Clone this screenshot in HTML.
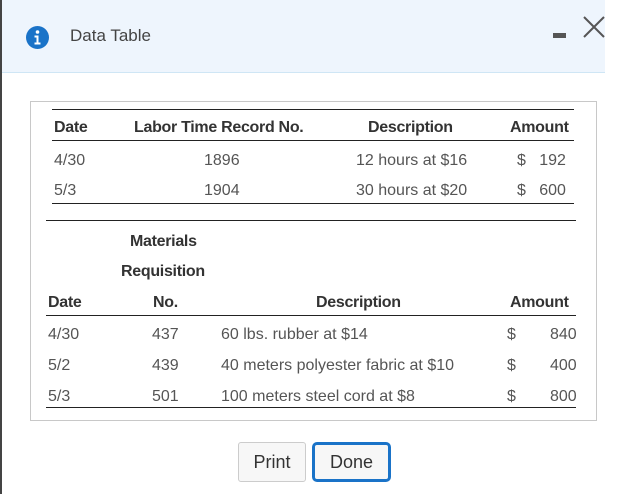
<!DOCTYPE html>
<html><head><style>
body{margin:0;width:618px;height:494px;background:#fff;font-family:"Liberation Sans",sans-serif;position:relative;overflow:hidden}
.a{position:absolute;white-space:nowrap}
.lb{position:absolute;left:0;top:0;width:2px;height:494px;background:#444}
.hd{position:absolute;left:2px;top:0;width:603px;height:72px;background:#eef5fd;border-bottom:1px solid #cfe6f5}
.box{position:absolute;left:30px;top:101px;width:565px;height:318px;border:1px solid #c8c8c8}
.ln{position:absolute;height:1px;background:#222}
.b{font-weight:bold;color:#333;font-size:16px;letter-spacing:-0.3px}
.t{color:#555;font-size:16px}
.btn{position:absolute;top:442px;height:40px;box-sizing:border-box;background:#f7f7f7;border:1px solid #ccc;border-radius:3px;font-size:18px;color:#333;text-align:center;line-height:38px}
</style></head><body>
<div class="lb"></div>
<div class="hd"></div>
<svg class="a" style="left:26px;top:26px" width="23" height="23" viewBox="0 0 23 23"><circle cx="11.5" cy="11.5" r="11.5" fill="#1a73c8"/><circle cx="11.5" cy="6" r="1.8" fill="#fff"/><path d="M8.5 9.5h4v7h2v2h-6v-2h2v-5h-2z" fill="#fff"/></svg>
<div class="a" style="left:70px;top:26px;font-size:17px;color:#444">Data Table</div>
<div class="a" style="left:553px;top:33px;width:13px;height:5px;background:#555"></div>
<svg class="a" style="left:583px;top:16px" width="22" height="22" viewBox="0 0 22 22"><path d="M1 1L21 21M21 1L1 21" stroke="#555" stroke-width="2"/></svg>
<div class="box"></div>
<div class="ln" style="left:52px;top:109px;width:522px"></div>
<div class="a b" style="left:54px;top:119px">Date</div>
<div class="a b" style="left:134px;top:119px">Labor Time Record No.</div>
<div class="a b" style="left:368px;top:119px">Description</div>
<div class="a b" style="left:510px;top:119px">Amount</div>
<div class="ln" style="left:52px;top:140px;width:522px"></div>
<div class="a t" style="left:54px;top:152px">4/30</div>
<div class="a t" style="left:204px;top:152px">1896</div>
<div class="a t" style="left:356px;top:152px">12 hours at $16</div>
<div class="a t" style="left:517px;top:152px">$&nbsp;&nbsp;&nbsp;192</div>
<div class="a t" style="left:54px;top:182px">5/3</div>
<div class="a t" style="left:204px;top:182px">1904</div>
<div class="a t" style="left:356px;top:182px">30 hours at $20</div>
<div class="a t" style="left:517px;top:182px">$&nbsp;&nbsp;&nbsp;600</div>
<div class="ln" style="left:52px;top:203px;width:522px"></div>
<div class="ln" style="left:46px;top:220px;width:530px"></div>
<div class="a b" style="left:130px;top:233px">Materials</div>
<div class="a b" style="left:121px;top:263px">Requisition</div>
<div class="a b" style="left:48px;top:294px">Date</div>
<div class="a b" style="left:153px;top:294px">No.</div>
<div class="a b" style="left:316px;top:294px">Description</div>
<div class="a b" style="left:510px;top:294px">Amount</div>
<div class="ln" style="left:46px;top:315px;width:530px"></div>
<div class="a t" style="left:48px;top:326px">4/30</div><div class="a t" style="left:152px;top:326px">437</div><div class="a t" style="left:221px;top:326px">60 lbs. rubber at $14</div><div class="a t" style="left:507px;top:326px">$</div><div class="a t" style="left:550px;top:326px">840</div>
<div class="a t" style="left:48px;top:357px">5/2</div><div class="a t" style="left:152px;top:357px">439</div><div class="a t" style="left:221px;top:357px">40 meters polyester fabric at $10</div><div class="a t" style="left:507px;top:357px">$</div><div class="a t" style="left:550px;top:357px">400</div>
<div class="a t" style="left:48px;top:388px">5/3</div><div class="a t" style="left:152px;top:388px">501</div><div class="a t" style="left:221px;top:388px">100 meters steel cord at $8</div><div class="a t" style="left:507px;top:388px">$</div><div class="a t" style="left:550px;top:388px">800</div>
<div class="ln" style="left:46px;top:407px;width:530px"></div>
<div class="btn" style="left:238px;width:68px">Print</div>
<div class="btn" style="left:312px;width:79px;border:3px solid #1a73c8;border-radius:5px;line-height:34px">Done</div>
</body></html>
